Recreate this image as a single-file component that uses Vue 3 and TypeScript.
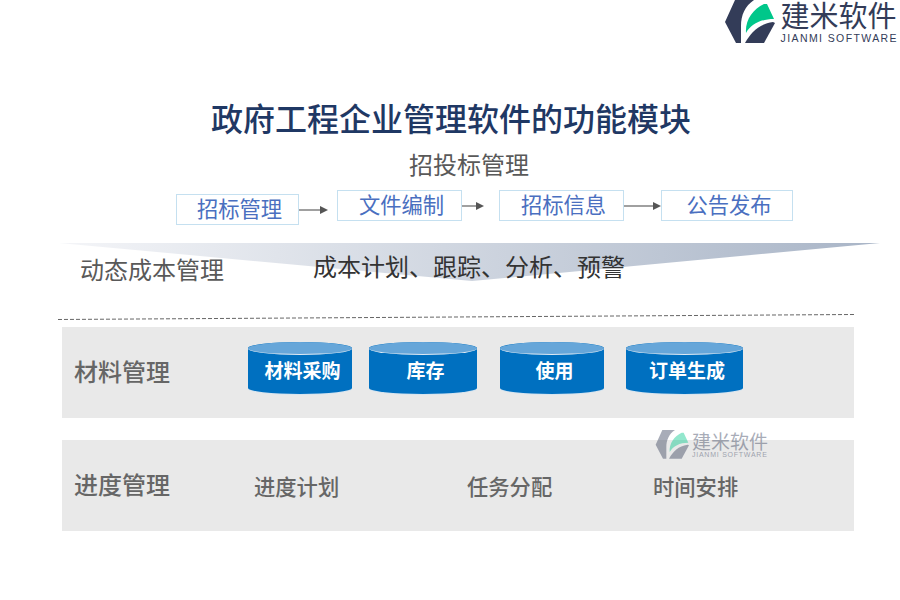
<script setup lang="ts">
const steps = [
  { label: '招标管理', low: true, width: 123, arrow: 29, gap: 9 },
  { label: '文件编制', low: false, width: 125, arrow: 22, gap: 15 },
  { label: '招标信息', low: false, width: 125, arrow: 37, gap: 0 },
  { label: '公告发布', low: false, width: 132, arrow: 0, gap: 0 },
]
const cylinders = [
  { label: '材料采购', width: 104, gap: 17 },
  { label: '库存', width: 108, gap: 23 },
  { label: '使用', width: 104, gap: 22 },
  { label: '订单生成', width: 117, gap: 0 },
]
const plans = ['进度计划', '任务分配', '时间安排']
</script>

<template>
  <div class="page">
    <header class="brand">
      <svg class="mark" viewBox="0 0 60 48" aria-hidden="true">
        <path d="M14 0H33C24 6 20 15 20 26L20 43H15L4 22Z" fill="#333c58" />
        <path d="M25 33C24 20 32 9 43 4L46 4L53 19C40 19 30 24 25 33Z" fill="#00c78a" />
        <path d="M24 43H43L54 23L52 22C38 24 30 32 24 43Z" fill="#333c58" />
      </svg>
      <div class="brand-text">
        <div class="brand-cn">建米软件</div>
        <div class="brand-en">JIANMI SOFTWARE</div>
      </div>
    </header>

    <h1 class="title">政府工程企业管理软件的功能模块</h1>
    <h2 class="subtitle">招投标管理</h2>

    <div class="flow">
      <template v-for="step in steps" :key="step.label">
        <div class="step" :class="{ low: step.low }" :style="{ width: step.width + 'px' }">{{ step.label }}</div>
        <svg
          v-if="step.arrow"
          class="arrow"
          :class="{ low: step.low }"
          :viewBox="`0 0 ${step.arrow} 10`"
          :style="{ width: step.arrow + 'px', marginRight: step.gap + 'px' }"
          aria-hidden="true"
        >
          <path :d="`M0 5H${step.arrow - 8}`" stroke="#777" stroke-width="1.4" />
          <path :d="`M${step.arrow - 8} 1L${step.arrow} 5L${step.arrow - 8} 9Z`" fill="#555" />
        </svg>
      </template>
    </div>

    <section class="cost">
      <svg class="funnel" viewBox="0 0 900 60" aria-hidden="true">
        <defs>
          <linearGradient id="fade" x1="0" x2="1" y1="0" y2="0">
            <stop offset="0" stop-color="#f4f5f8" />
            <stop offset="1" stop-color="#a9b5c7" />
          </linearGradient>
        </defs>
        <polygon points="59,0 880,0 472,38" fill="url(#fade)" />
      </svg>
      <div class="cost-label">动态成本管理</div>
      <div class="cost-text">成本计划、跟踪、分析、预警</div>
    </section>

    <svg class="dash" viewBox="0 0 900 8" aria-hidden="true">
      <line x1="58" y1="6.5" x2="854" y2="1.5" stroke="#666" stroke-width="1" stroke-dasharray="4 2" />
    </svg>

    <section class="band">
      <div class="band-label">材料管理</div>
      <div class="cylinders">
        <div
          v-for="c in cylinders"
          :key="c.label"
          class="cylinder"
          :style="{ width: c.width + 'px', marginRight: c.gap + 'px' }"
        >
          <span class="cyl-top"></span>
          {{ c.label }}
        </div>
      </div>
    </section>

    <section class="band second">
      <div class="band-label">进度管理</div>
      <div class="plans">
        <span v-for="p in plans" :key="p" class="plan">{{ p }}</span>
      </div>
      <div class="watermark">
        <svg class="wm-mark" viewBox="0 0 60 48" aria-hidden="true">
          <path d="M14 0H33C24 6 20 15 20 26L20 43H15L4 22Z" fill="#333c58" />
          <path d="M25 33C24 20 32 9 43 4L46 4L53 19C40 19 30 24 25 33Z" fill="#00c78a" />
          <path d="M24 43H43L54 23L52 22C38 24 30 32 24 43Z" fill="#333c58" />
        </svg>
        <div class="wm-text">
          <div class="wm-cn">建米软件</div>
          <div class="wm-en">JIANMI SOFTWARE</div>
        </div>
      </div>
    </section>
  </div>
</template>

<style>
html, body { margin: 0; background: #fff; }
</style>

<style scoped>
.page {
  width: 900px;
  height: 600px;
  overflow: hidden;
  background: #fff;
  font-family: "Liberation Serif", "Noto Sans CJK SC", serif;
  display: flex;
  flex-direction: column;
}
.brand {
  height: 46px;
  display: flex;
  justify-content: flex-end;
  align-items: flex-start;
  padding-right: 2px;
}
.mark { width: 60px; height: 48px; flex: none; }
.brand-cn {
  font-family: "Noto Sans CJK SC", sans-serif;
  font-size: 29px;
  line-height: 29px;
  color: #333c58;
  white-space: nowrap;
}
.brand-en {
  font-family: "Liberation Sans", sans-serif;
  font-size: 10.5px;
  line-height: 12px;
  letter-spacing: 1.4px;
  color: #333c58;
  margin-top: 3px;
  white-space: nowrap;
}
.title {
  margin: 54px 0 0 2px;
  font-size: 32px;
  line-height: 40px;
  font-weight: 500;
  color: #1f3864;
  text-align: center;
}
.subtitle {
  margin: 10px 0 0 38px;
  font-size: 24px;
  line-height: 32px;
  font-weight: 400;
  color: #595959;
  text-align: center;
}
.flow {
  margin: 8px 0 0 176px;
  display: flex;
  align-items: flex-start;
}
.step {
  box-sizing: border-box;
  height: 31px;
  padding-left: 4px;
  border: 1px solid #c5e0f0;
  color: #4a6fc0;
  font-size: 21.3px;
  line-height: 31px;
  text-align: center;
}
.step.low { margin-top: 4px; }
.arrow { height: 10px; margin-top: 11px; flex: none; }
.arrow.low { margin-top: 15px; }
.cost {
  position: relative;
  height: 70px;
  margin-top: 18px;
}
.funnel {
  position: absolute;
  left: 0;
  top: 0;
  width: 900px;
  height: 60px;
}
.cost-label, .cost-text {
  position: absolute;
  font-size: 24px;
  line-height: 32px;
}
.cost-label { left: 80px; top: 12px; color: #595959; }
.cost-text { left: 313px; top: 9px; color: #333; }
.dash { display: block; width: 900px; height: 8px; }
.band {
  position: relative;
  box-sizing: border-box;
  width: 792px;
  height: 91px;
  margin: 6px 0 0 62px;
  background: #e9e9e9;
  display: flex;
  align-items: center;
  padding-left: 12px;
}
.band.second { margin-top: 22px; }
.band-label {
  width: 96px;
  font-size: 24px;
  line-height: 32px;
  color: #666;
  font-weight: 500;
  white-space: nowrap;
}
.cylinders {
  display: flex;
  margin-left: 78px;
  margin-top: -10px;
}
.cylinder {
  position: relative;
  box-sizing: border-box;
  height: 52px;
  padding-top: 6px;
  padding-left: 5px;
  background: #0070c0;
  border-radius: 50% / 6px;
  color: #fff;
  font-size: 19px;
  font-weight: 700;
  line-height: 48px;
  text-align: center;
  white-space: nowrap;
  box-shadow: 0 1px 0 #d6e4ef;
}
.cyl-top {
  position: absolute;
  left: 0;
  right: 0;
  top: 0;
  height: 13px;
  box-sizing: border-box;
  border-radius: 50%;
  background: #66a6d9;
  border-bottom: 1px solid #dfe9f2;
}
.plans {
  position: relative;
  height: 32px;
  flex: 1;
  margin-left: 84px;
  display: flex;
  align-items: center;
  margin-top: 0;
}
.plan {
  font-size: 21.3px;
  font-weight: 500;
  color: #666;
  white-space: nowrap;
}
.plan:nth-child(1) { width: 213px; }
.plan:nth-child(2) { width: 186px; }
.watermark {
  position: absolute;
  left: 591px;
  top: -10px;
  display: flex;
  opacity: 0.42;
  align-items: flex-start;
}
.wm-mark { width: 40px; height: 32px; margin-right: -1px; flex: none; }
.wm-text { padding-top: 1px; }
.wm-cn {
  font-family: "Noto Sans CJK SC", sans-serif;
  font-size: 19px;
  line-height: 20px;
  color: #333c58;
  white-space: nowrap;
}
.wm-en {
  font-family: "Liberation Sans", sans-serif;
  font-size: 7px;
  line-height: 8px;
  letter-spacing: 0.75px;
  color: #333c58;
  white-space: nowrap;
}
</style>
